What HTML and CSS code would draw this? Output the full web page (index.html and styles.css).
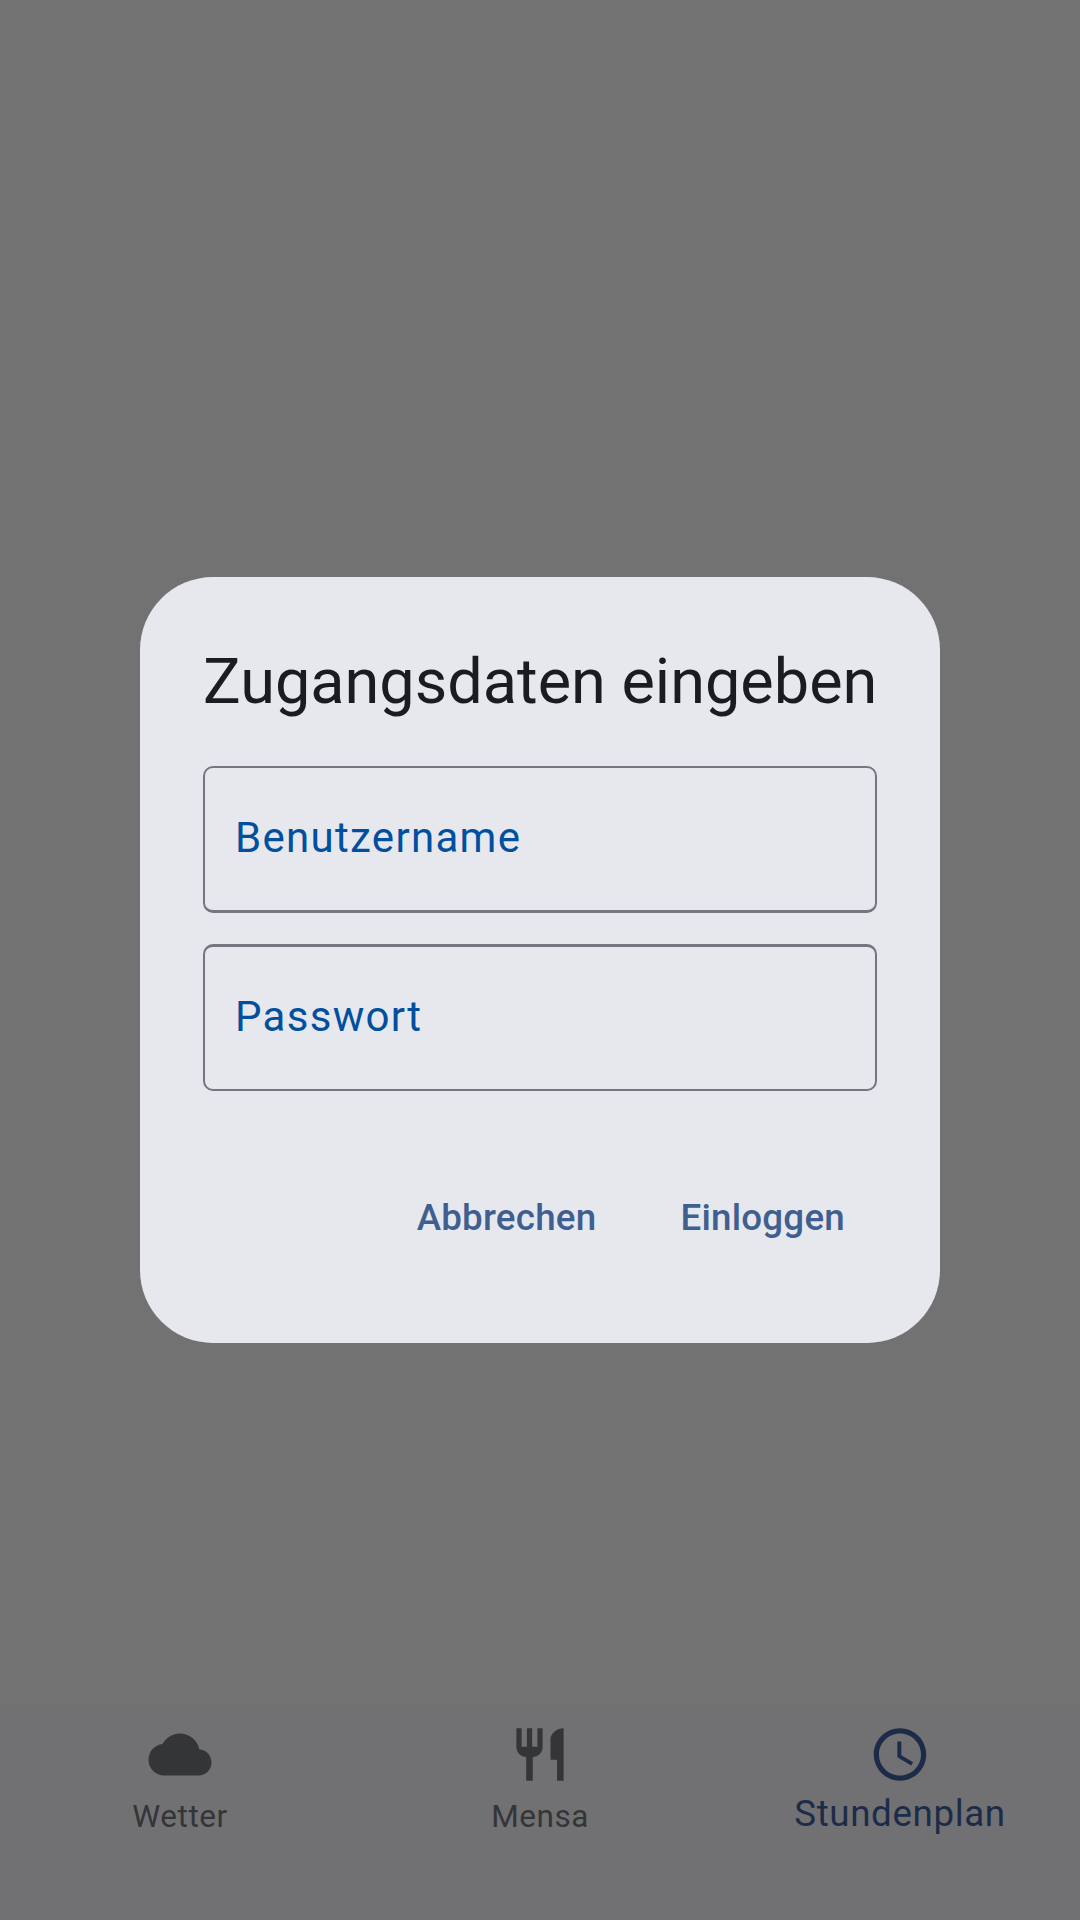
FILE: index.html
```html
<!DOCTYPE html>
<html lang="de">
<head>
<meta charset="utf-8">
<title>Stundenplan</title>
<link rel="stylesheet" href="styles.css">
</head>
<body>
<main class="screen">
  <section class="dialog">
    <h1 class="title">Zugangsdaten eingeben</h1>
    <div class="field username">Benutzername</div>
    <div class="field password">Passwort</div>
    <div class="actions">
      <button class="action">Abbrechen</button>
      <button class="action">Einloggen</button>
    </div>
  </section>
</main>
<nav class="tabs">
  <a class="tab">
    <svg class="icon" viewBox="0 0 24 24"><path d="M19.35 10.04C18.67 6.59 15.64 4 12 4 9.11 4 6.6 5.64 5.35 8.04 2.34 8.36 0 10.91 0 14c0 3.31 2.69 6 6 6h13c2.76 0 5-2.24 5-5 0-2.64-2.05-4.78-4.65-4.96z"/></svg>
    <span class="label">Wetter</span>
  </a>
  <a class="tab">
    <svg class="icon" viewBox="0 0 24 24"><path d="M11 9H9V2H7v7H5V2H3v7c0 2.12 1.66 3.84 3.75 3.97V22h2.5v-9.03C11.34 12.84 13 11.12 13 9V2h-2v7zm5-3v8h2.5v8H21V2c-2.76 0-5 2.24-5 4z"/></svg>
    <span class="label">Mensa</span>
  </a>
  <a class="tab active">
    <svg class="icon" viewBox="0 0 24 24"><path d="M11.99 2C6.47 2 2 6.48 2 12s4.47 10 9.99 10C17.52 22 22 17.52 22 12S17.52 2 11.99 2zM12 20c-4.42 0-8-3.58-8-8s3.58-8 8-8 8 3.58 8 8-3.58 8-8 8zm.5-13H11v6l5.25 3.15.75-1.23-4.5-2.67z"/></svg>
    <span class="label">Stundenplan</span>
  </a>
</nav>
</body>
</html>
```
FILE: styles.css
```css
* { box-sizing: border-box; }
body {
  margin: 0;
  height: 1920px;
  display: flex;
  flex-direction: column;
  background: #727272;
  font-family: Roboto, sans-serif;
}
.screen {
  height: 1705px;
  padding-top: 577px;
  display: flex;
  justify-content: center;
  align-items: flex-start;
}
.dialog {
  width: 800px;
  height: 766px;
  padding: 63px;
  border-radius: 73px;
  background: #e7e8ee;
  display: flex;
  flex-direction: column;
}
.title {
  margin: 0 0 42px;
  font-size: 63px;
  line-height: 84px;
  font-weight: 400;
  color: #1a1c20;
  white-space: nowrap;
}
.field {
  height: 147px;
  padding: 0 30px 3px;
  border: 2px solid #757680;
  border-radius: 10px;
  display: flex;
  align-items: center;
  font-size: 42px;
  letter-spacing: 1.3px;
  color: #00509f;
}
.username {
  margin-bottom: 31px;
  border-bottom-width: 3px;
}
.password { border-top-width: 3px; }
.actions {
  margin-top: 74px;
  display: flex;
  justify-content: flex-end;
  gap: 20px;
}
.action {
  height: 105px;
  padding: 0 32px;
  border: 0;
  background: none;
  font: 500 36.75px Roboto, sans-serif;
  letter-spacing: .22px;
  color: #3e5f90;
}
.tabs {
  height: 215px;
  padding-top: 18px;
  background: #717174;
  display: grid;
  grid-template-columns: repeat(3, 1fr);
}
.tab {
  display: flex;
  flex-direction: column;
  align-items: center;
  color: #343537;
}
.icon {
  width: 64px;
  height: 63px;
  fill: currentColor;
}
.label {
  margin-top: 11px;
  font-size: 31.5px;
  line-height: 40px;
  letter-spacing: .55px;
}
.active { color: #1c2c48; }
.active .label {
  margin-top: 8px;
  font-size: 36.75px;
  letter-spacing: .6px;
}
```
